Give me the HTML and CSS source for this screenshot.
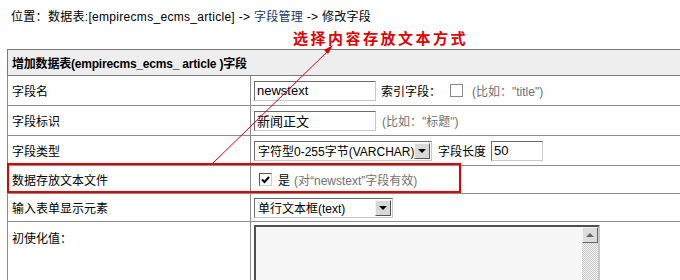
FILE: index.html
```html
<!DOCTYPE html>
<html lang="zh-CN">
<head>
    <meta charset="UTF-8">
    <title>修改字段</title>
    <link rel="stylesheet" href="styles.css">
</head>
<body>
    <div class="crumb">位置：数据表:[empirecms_ecms_article] -&gt; <a href="#">字段管理</a> -&gt; 修改字段</div>
    <div class="note">选择内容存放文本方式</div>

    <table class="form-table">
        <tr class="head">
            <td colspan="2">增加数据表(empirecms_ecms_ article )字段</td>
        </tr>
        <tr>
            <td class="label">字段名</td>
            <td class="field">
                <div class="line">
                    <input type="text" class="txt w122" value="newstext">
                    <span class="gap5">索引字段：</span>
                    <span class="chk gap9"></span>
                    <span class="hint gap9">(比如："title")</span>
                </div>
            </td>
        </tr>
        <tr>
            <td class="label">字段标识</td>
            <td class="field">
                <div class="line">
                    <input type="text" class="txt w122" value="新闻正文">
                    <span class="hint gap6">(比如："标题")</span>
                </div>
            </td>
        </tr>
        <tr>
            <td class="label">字段类型</td>
            <td class="field">
                <div class="line">
                    <span class="sel w178"><span class="sel-text">字符型0-255字节(VARCHAR)</span><span class="sel-btn"><i></i></span></span>
                    <span class="gap6">字段长度</span>
                    <input type="text" class="txt w52 gap5" value="50">
                </div>
            </td>
        </tr>
        <tr class="row-store">
            <td class="label">数据存放文本文件</td>
            <td class="field">
                <div class="line">
                    <span class="chk checked gap5"><svg width="9" height="8" viewBox="0 0 9 8"><path d="M1 3.5 L3.5 6 L8 1" fill="none" stroke="#000" stroke-width="2"/></svg></span>
                    <span class="gap6">是</span>
                    <span class="hint gap4">(对“newstext”字段有效)</span>
                </div>
            </td>
        </tr>
        <tr class="row-form">
            <td class="label">输入表单显示元素</td>
            <td class="field">
                <div class="line">
                    <span class="sel w139"><span class="sel-text">单行文本框(text)</span><span class="sel-btn"><i></i></span></span>
                </div>
            </td>
        </tr>
        <tr class="row-init">
            <td class="label">初使化值：</td>
            <td class="field">
                <div class="area">
                    <div class="area-body"></div>
                    <div class="scroll"><span class="scroll-up"><i></i></span></div>
                </div>
            </td>
        </tr>
    </table>

    <div class="mark-box"></div>
    <svg class="mark-arrow" width="680" height="280" viewBox="0 0 680 280">
        <line x1="212" y1="164" x2="329" y2="50" stroke="#e00000" stroke-width="1"/>
        <polygon points="333,45 324,50 328,54" fill="#e00000"/>
    </svg>
</body>
</html>
```

FILE: styles.css
```css
* {
    margin: 0;
    padding: 0;
    box-sizing: border-box;
}

body {
    font-family: 'Liberation Sans', 'Noto Sans CJK SC', sans-serif;
    font-size: 12px;
    color: #000;
    background: #fff;
    width: 680px;
    height: 280px;
    overflow: hidden;
    position: relative;
}

.crumb {
    padding: 10px 0 0 11px;
    height: 24px;
    line-height: 14px;
    letter-spacing: 0.3px;
}

.crumb a {
    color: #1a3566;
    text-decoration: none;
}

.note {
    margin: 4px 0 0 293px;
    height: 21px;
    line-height: 21px;
    font-size: 15px;
    font-weight: bold;
    letter-spacing: 2.5px;
    color: #e00000;
}

/* Form table */
.form-table {
    margin-left: 7px;
    width: 720px;
    border-collapse: collapse;
}

.form-table td {
    border: 1px solid #8c8c8c;
    padding: 0 3px;
    vertical-align: middle;
}

.head td {
    height: 26px;
    background: #eeeeee;
    border-color: #7a7a7a;
    font-weight: bold;
    padding-left: 4px;
    letter-spacing: -0.2px;
}

.form-table td.label {
    width: 243px;
    height: 30px;
    padding-left: 4px;
}

.row-store td.label { height: 28px; }
.row-form td.label { height: 28px; }

.row-init td {
    height: 70px;
    vertical-align: top;
}

.row-init td.label {
    padding-top: 7px;
}

.row-init td.field {
    padding-top: 3px;
}

.line {
    display: flex;
    align-items: center;
    white-space: nowrap;
}

.gap4 { margin-left: 4px; }
.gap5 { margin-left: 5px; }
.gap6 { margin-left: 6px; }
.gap9 { margin-left: 9px; }

.hint {
    color: #707070;
}

.txt {
    height: 20px;
    border: 1px solid #c8c8c8;
    border-top-color: #6a6a6a;
    border-left-color: #6a6a6a;
    font: 13px 'Liberation Sans', 'Noto Sans CJK SC', sans-serif;
    padding: 0 2px;
    background: #fff;
    color: #000;
}

.w122 { width: 122px; }
.w52 { width: 52px; }

.chk {
    display: inline-flex;
    align-items: center;
    justify-content: center;
    width: 13px;
    height: 13px;
    border: 1px solid #8a8a8a;
    background: #fff;
}

.chk.checked {
    border-color: #555;
    border-right-color: #ccc;
    border-bottom-color: #ccc;
}

.sel {
    display: inline-flex;
    align-items: center;
    height: 20px;
    border: 1px solid #c8c8c8;
    border-top-color: #6a6a6a;
    border-left-color: #6a6a6a;
    background: #fff;
}

.w178 { width: 178px; }
.w139 { width: 139px; }

.sel-text {
    flex: 1;
    padding-left: 3px;
    font-size: 12px;
    overflow: hidden;
}

.sel-btn {
    display: flex;
    align-items: center;
    justify-content: center;
    width: 16px;
    height: 16px;
    margin-right: 1px;
    background: #d8d8d8;
    border: 1px solid #f4f4f4;
    border-right-color: #555;
    border-bottom-color: #555;
}

.sel-btn i {
    border-left: 4px solid transparent;
    border-right: 4px solid transparent;
    border-top: 4px solid #000;
}

/* textarea */
.area {
    display: flex;
    width: 346px;
    height: 70px;
    border: 2px solid #c8c8c8;
    border-top-color: #505050;
    border-left-color: #505050;
    background: #f7f7f7;
}

.area-body {
    flex: 1;
}

.scroll {
    width: 16px;
    background: repeating-conic-gradient(#c8c8c8 0 25%, #f4f4f4 0 50%) 0 0 / 2px 2px;
}

.scroll-up {
    display: flex;
    align-items: center;
    justify-content: center;
    height: 16px;
    background: #dcdcdc;
    border: 1px solid #f4f4f4;
    border-right-color: #666;
    border-bottom-color: #666;
}

.scroll-up i {
    border-left: 4px solid transparent;
    border-right: 4px solid transparent;
    border-bottom: 4px solid #666;
}

/* annotation overlay */
.mark-box {
    position: absolute;
    left: 7px;
    top: 163px;
    width: 454px;
    height: 30px;
    border: 2px solid #e00000;
}

.mark-arrow {
    position: absolute;
    left: 0;
    top: 0;
    pointer-events: none;
}
```
